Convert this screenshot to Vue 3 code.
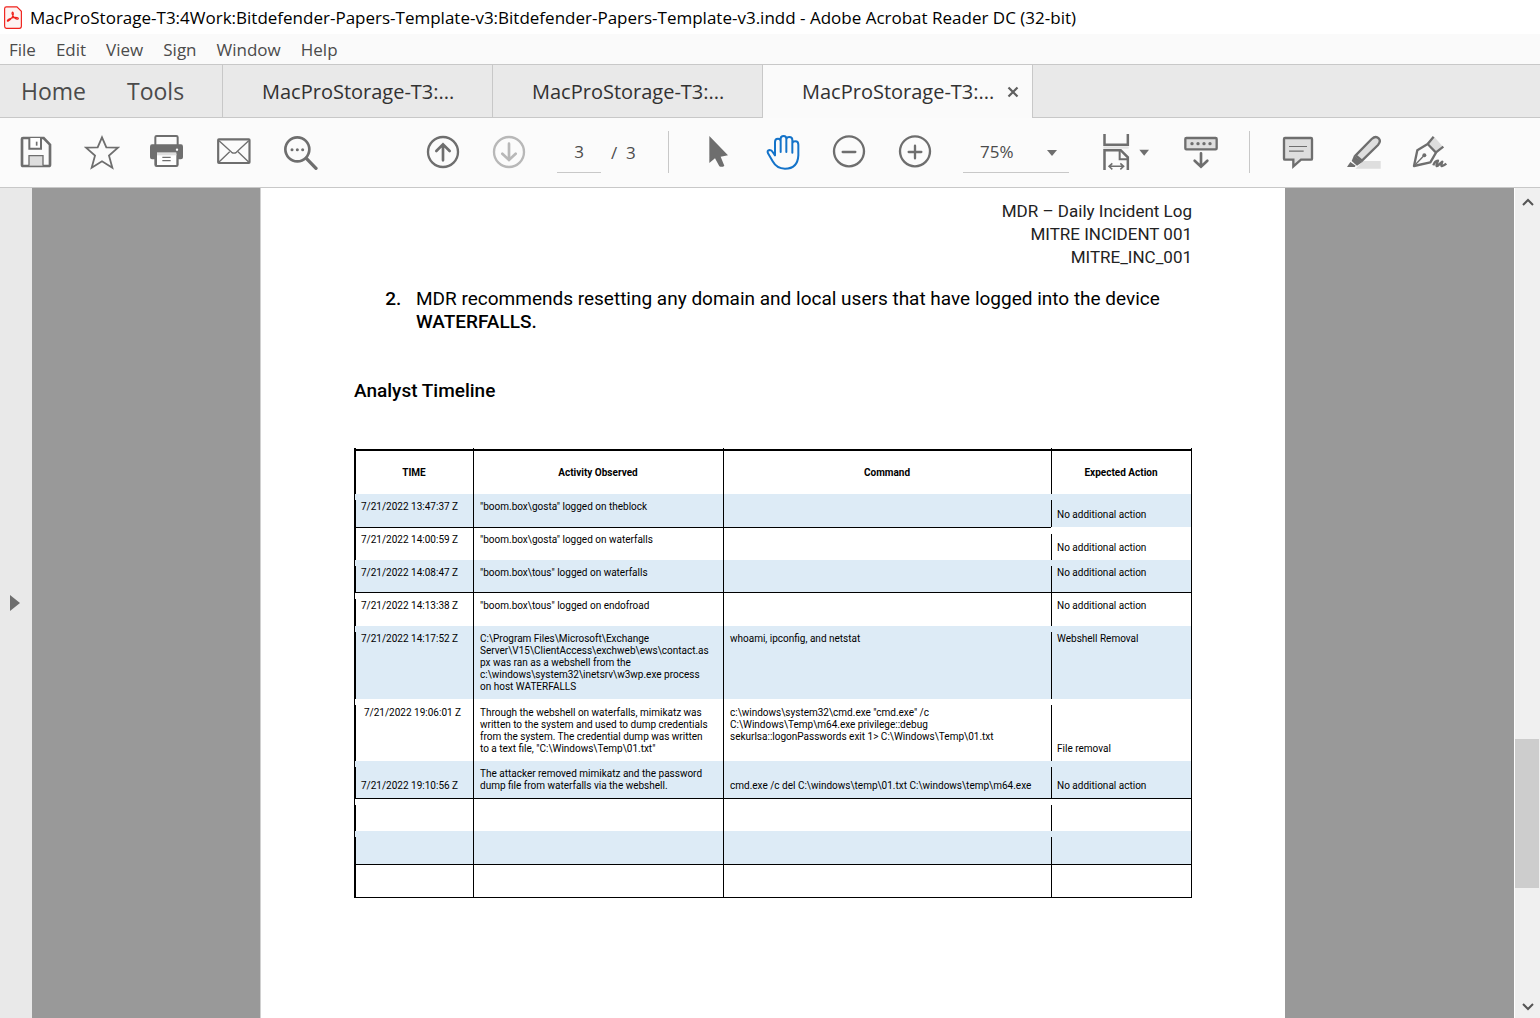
<script setup>
import { ref } from 'vue'

const menus = ['File', 'Edit', 'View', 'Sign', 'Window', 'Help']
const tabs = [
  { id: 1, label: 'MacProStorage-T3:...', active: false },
  { id: 2, label: 'MacProStorage-T3:...', active: false },
  { id: 3, label: 'MacProStorage-T3:...', active: true },
]
const page = ref('3')
const zoom = ref('75%')

// gap: row whose vertical rules start a little below its top; ruled: row closed by a horizontal rule
const rows = [
  { time: '7/21/2022 13:47:37 Z', activity: '"boom.box\\gosta" logged on theblock', action: 'No additional action', cls: 'h34 blue ruled open gap gap-action low-action' },
  { time: '7/21/2022 14:00:59 Z', activity: '"boom.box\\gosta" logged on waterfalls', action: 'No additional action', cls: 'h32 tight gap-action low-action' },
  { time: '7/21/2022 14:08:47 Z', activity: '"boom.box\\tous" logged on waterfalls', action: 'No additional action', cls: 'h33 blue ruled gap gap-action' },
  { time: '7/21/2022 14:13:38 Z', activity: '"boom.box\\tous" logged on endofroad', action: 'No additional action', cls: 'h33 gap' },
  { time: '7/21/2022 14:17:52 Z', activity: 'C:\\Program Files\\Microsoft\\Exchange\nServer\\V15\\ClientAccess\\exchweb\\ews\\contact.as\npx was ran as a webshell from the\nc:\\windows\\system32\\inetsrv\\w3wp.exe process\non host WATERFALLS', command: 'whoami, ipconfig, and netstat', action: 'Webshell Removal', cls: 'h73 blue gap gap-action' },
  { time: '7/21/2022 19:06:01 Z', activity: 'Through the webshell on waterfalls, mimikatz was\nwritten to the system and used to dump credentials\nfrom the system. The credential dump was written\nto a text file, "C:\\Windows\\Temp\\01.txt"', command: 'c:\\windows\\system32\\cmd.exe "cmd.exe" /c\nC:\\Windows\\Temp\\m64.exe privilege::debug\nsekurlsa::logonPasswords exit 1> C:\\Windows\\Temp\\01.txt', action: 'File removal', cls: 'h62 indent gap gap-action low-action' },
  { time: '7/21/2022 19:10:56 Z', activity: 'The attacker removed mimikatz and the password\ndump file from waterfalls via the webshell.', command: 'cmd.exe /c del C:\\windows\\temp\\01.txt C:\\windows\\temp\\m64.exe', action: 'No additional action', cls: 'h38 blue ruled low gap gap-action' },
  { cls: 'h32 gap gap-action' },
  { cls: 'h34 blue ruled gap gap-action' },
  { cls: 'h33 ruled' },
]
</script>

<template>
  <div class="app">
    <header class="title-bar">
      <svg class="app-icon" viewBox="12 14 54 70" aria-hidden="true">
        <path d="M19 16.500H51L64.500 30V76q0 6-6 6H19q-5.500 0-5.500-6V22q0-5.500 5.500-5.500Z" fill="#fdf3f2" stroke="#f0201a" stroke-width="3.500" />
        <path d="M24 60C32 57 42 43 40 36C38 30 34 33 37 40C41 50 49 56 54 54C58 51 52 48 44 49C34 50 24 54 22 58Q21 61 24 60Z" fill="none" stroke="#f0201a" stroke-width="3.500" />
      </svg>
      <span>MacProStorage-T3:4Work:Bitdefender-Papers-Template-v3:Bitdefender-Papers-Template-v3.indd - Adobe Acrobat Reader DC (32-bit)</span>
    </header>

    <nav class="menu-bar" aria-label="Application menu">
      <button v-for="m in menus" :key="m" type="button">{{ m }}</button>
    </nav>

    <div class="tab-bar">
      <div class="fixed-tabs">
        <button type="button">Home</button>
        <button type="button">Tools</button>
      </div>
      <div v-for="t in tabs" :key="t.id" class="tab" :class="{ active: t.active }">
        <button type="button" class="tab-name">{{ t.label }}</button>
        <button v-if="t.active" type="button" class="tab-close" aria-label="Close tab">
          <svg viewBox="0 0 12 12"><path d="M1.500 1.500L10.500 10.500M10.500 1.500L1.500 10.500" stroke="#5f5f5f" stroke-width="2.200" /></svg>
        </button>
      </div>
    </div>

    <div class="toolbar" role="toolbar" aria-label="Document tools">
      <button type="button" class="tool" aria-label="Save">
        <svg viewBox="54 42 108 108">
          <path d="M69 54H131L150 74V134Q150 138 146 138H69Q66 138 66 134V57Q66 54 69 54Z" fill="none" stroke="#6e6e6e" stroke-width="8" />
          <path d="M88 54V86H123V54" fill="#fff" stroke="#6e6e6e" stroke-width="6" />
          <path d="M110 65V77" stroke="#6e6e6e" stroke-width="5" />
          <path d="M87 137V107H129V137" fill="#dedede" stroke="#6e6e6e" stroke-width="4" />
        </svg>
      </button>
      <button type="button" class="tool" aria-label="Star">
        <svg viewBox="252 42 108 108">
          <path d="M306 52L319 82L354 83L327 107L337 143L306 124L275 143L285 107L258 83L293 82Z" fill="none" stroke="#6e6e6e" stroke-width="5.500" />
        </svg>
      </button>
      <button type="button" class="tool" aria-label="Print">
        <svg viewBox="450 42 108 108">
          <path d="M466 78V52Q466 48 470 48H529Q533 48 533 52V78" fill="none" stroke="#6e6e6e" stroke-width="6" />
          <path d="M456 73H543Q549 73 549 80V112Q549 118 543 118H536V134Q536 141 529 141H470Q463 141 463 134V118H456Q450 118 450 112V80Q450 73 456 73Z" fill="#6e6e6e" />
          <path d="M471 101H529V135H471Z" fill="#fff" />
          <path d="M471 97H529V106H471Z" fill="#dedede" />
          <path d="M487 112H512M487 122H512" stroke="#6e6e6e" stroke-width="3.500" />
          <circle cx="531" cy="89" r="3.500" fill="#fff" />
        </svg>
      </button>
      <button type="button" class="tool" aria-label="Send by email">
        <svg viewBox="648 42 108 108">
          <rect x="654.500" y="58" width="94" height="71" rx="2" fill="none" stroke="#6e6e6e" stroke-width="6.500" />
          <path d="M657 62L695 97Q702 102 709 97L746 62M657 126L689 95M746 126L714 95" fill="none" stroke="#6e6e6e" stroke-width="4" />
        </svg>
      </button>
      <button type="button" class="tool" aria-label="Search">
        <svg viewBox="846 42 108 108">
          <circle cx="892" cy="88" r="36" fill="none" stroke="#6e6e6e" stroke-width="8" />
          <path d="M919 115L948 145" stroke="#6e6e6e" stroke-width="10" stroke-linecap="round" />
          <circle cx="876" cy="89" r="4.500" fill="#6e6e6e" /><circle cx="892" cy="89" r="4.500" fill="#6e6e6e" /><circle cx="908" cy="89" r="4.500" fill="#6e6e6e" />
        </svg>
      </button>

      <div class="tool-group paging">
        <button type="button" class="tool" aria-label="Previous page">
          <svg viewBox="75 222 108 108" fill="none" stroke="#6e6e6e" stroke-width="7">
            <circle cx="129" cy="276" r="45" /><path d="M129 301V255M109 273L129 253L149 273" stroke-width="8" stroke-linecap="round" />
          </svg>
        </button>
        <button type="button" class="tool" aria-label="Next page" disabled>
          <svg viewBox="273 222 108 108" fill="none" stroke="#b8b8b8" stroke-width="7">
            <circle cx="327" cy="276" r="45" /><path d="M327 251V297M307 281L327 300L347 281" stroke-width="8" stroke-linecap="round" />
          </svg>
        </button>
        <div class="page-box">
          <input v-model="page" type="text" aria-label="Page number" />
          <span>/&nbsp; 3</span>
        </div>
      </div>
      <span class="divider"></span>

      <button type="button" class="tool" aria-label="Select">
        <svg viewBox="897 222 108 108"><path d="M928 228V309L945 295L958 319Q967 323 973 317L962 290L984 286Z" fill="#6e6e6e" /></svg>
      </button>
      <button type="button" class="tool" aria-label="Hand">
        <svg viewBox="15 222 108 108" fill="none" stroke="#1473c9" stroke-width="6" stroke-linecap="round" stroke-linejoin="round">
          <path d="M45 286V246Q45 236 54 236Q62 236 62 244V276M62 244V236Q62 228 71 228Q79 228 79 236V276M79 238Q80 231 88 231Q97 231 97 240V278M97 250Q98 244 106 244Q115 244 115 254V286Q113 326 75 326Q50 326 38 304L24 280Q20 271 29 270Q35 270 38 276L45 286" />
        </svg>
      </button>
      <button type="button" class="tool" aria-label="Zoom out">
        <svg viewBox="213 222 108 108" fill="none" stroke="#6e6e6e" stroke-width="7">
          <circle cx="267" cy="274" r="45" /><path d="M248 276H286" stroke-width="7" stroke-linecap="round" />
        </svg>
      </button>
      <button type="button" class="tool" aria-label="Zoom in">
        <svg viewBox="411 222 108 108" fill="none" stroke="#6e6e6e" stroke-width="7">
          <circle cx="465" cy="274" r="45" /><path d="M446 276H484M465 257V295" stroke-width="7" stroke-linecap="round" />
        </svg>
      </button>
      <div class="zoom-box">
        <select v-model="zoom" aria-label="Zoom level">
          <option>50%</option>
          <option>75%</option>
          <option>100%</option>
        </select>
        <svg viewBox="0 0 10 6" aria-hidden="true"><path d="M0 0H10L5 6Z" fill="#6e6e6e" /></svg>
      </div>
      <button type="button" class="tool fit" aria-label="Fit width">
        <svg viewBox="1017 222 162 108">
          <path d="M1033.500 222V254H1103.500V222" fill="none" stroke="#6e6e6e" stroke-width="7.500" />
          <path d="M1030 259H1106V266H1030Z" fill="#e2e2e2" />
          <path d="M1033.500 330V270.500H1082L1103.500 292V330" fill="none" stroke="#6e6e6e" stroke-width="7.500" />
          <path d="M1079 270V298H1104" fill="none" stroke="#6e6e6e" stroke-width="6" />
          <path d="M1050 319H1088M1057 310L1047 319L1057 328M1081 310L1091 319L1081 328" fill="none" stroke="#6e6e6e" stroke-width="4.500" />
          <path d="M1138 269H1167L1152.500 287Z" fill="#6e6e6e" />
        </svg>
      </button>
      <button type="button" class="tool" aria-label="Page display">
        <svg viewBox="309 222 108 108">
          <rect x="316" y="234" width="94" height="34" rx="3" fill="#dedede" stroke="#6e6e6e" stroke-width="7" />
          <circle cx="336" cy="251" r="5" fill="#6e6e6e" /><circle cx="354" cy="251" r="5" fill="#6e6e6e" /><circle cx="372" cy="251" r="5" fill="#6e6e6e" /><circle cx="390" cy="251" r="5" fill="#6e6e6e" />
          <path d="M363 280V318M344 302L363 320L382 302" fill="none" stroke="#6e6e6e" stroke-width="8" stroke-linecap="round" />
        </svg>
      </button>
      <span class="divider"></span>
      <button type="button" class="tool" aria-label="Comment">
        <svg viewBox="600 222 108 108">
          <path d="M615 234H693Q696 234 696 237V296Q696 299 693 299H663L640 319V299H615Q612 299 612 296V237Q612 234 615 234Z" fill="#dedede" stroke="#6e6e6e" stroke-width="7" />
          <path d="M627 259.500H681M627 273.500H671" stroke="#6e6e6e" stroke-width="3.500" />
        </svg>
      </button>
      <button type="button" class="tool" aria-label="Highlight">
        <svg viewBox="798 222 108 108">
          <path d="M826 326L850 303H902V326Z" fill="#dedede" />
          <path d="M827 286L875 237Q887 226 896 235Q904 243 894 255L846 302Z" fill="#dedede" stroke="#6e6e6e" stroke-width="7" />
          <path d="M822 286L847 306L831 317L815 303Z" fill="#6e6e6e" />
          <path d="M801 321L811 306L827 317L824 321Z" fill="#6e6e6e" />
        </svg>
      </button>
      <button type="button" class="tool" aria-label="Sign document">
        <svg viewBox="996 222 108 108">
          <path d="M1046 250L1064 232L1087 258L1070 276Z" fill="#dedede" />
          <path d="M1002 318L1012 271L1043 252L1068 278L1051 307Z" fill="none" stroke="#6e6e6e" stroke-width="7" stroke-linejoin="round" />
          <path d="M1043 252L1061 230M1068 277L1090 260" stroke="#6e6e6e" stroke-width="7" />
          <path d="M1002 318L1030 289" stroke="#6e6e6e" stroke-width="4" /><circle cx="1033" cy="286" r="6" fill="#6e6e6e" />
          <path d="M1060 316Q1064 303 1074 302Q1066 320 1072 318L1087 305Q1081 320 1087 318T1099 311" fill="none" stroke="#6e6e6e" stroke-width="7" stroke-linejoin="round" />
        </svg>
      </button>
    </div>

    <main class="workspace">
      <button type="button" class="rail" aria-label="Show navigation pane">
        <svg viewBox="0 0 10 16"><path d="M0 0L10 8L0 16Z" fill="#6e6e6e" /></svg>
      </button>

      <div class="viewer">
        <article class="sheet">
          <div class="doc-head">
            <p>MDR – Daily Incident Log</p>
            <p>MITRE INCIDENT 001</p>
            <p>MITRE_INC_001</p>
          </div>
          <ol start="2" class="advice">
            <li>MDR recommends resetting any domain and local users that have logged into the device <b>WATERFALLS.</b></li>
          </ol>
          <h2>Analyst Timeline</h2>
          <table>
            <colgroup>
              <col class="c-time" /><col class="c-activity" /><col class="c-command" /><col class="c-action" />
            </colgroup>
            <thead>
              <tr>
                <th scope="col">TIME</th>
                <th scope="col">Activity Observed</th>
                <th scope="col">Command</th>
                <th scope="col">Expected Action</th>
              </tr>
            </thead>
            <tbody>
              <tr v-for="(r, i) in rows" :key="i" :class="r.cls">
                <td class="time">{{ r.time }}</td>
                <td>{{ r.activity }}</td>
                <td>{{ r.command }}</td>
                <td class="action">{{ r.action }}</td>
              </tr>
            </tbody>
          </table>
        </article>
      </div>

      <div class="scroll" aria-hidden="true">
        <svg class="up" viewBox="0 0 12 8"><path d="M1 7L6 2L11 7" /></svg>
        <div class="track"><i class="before"></i><i class="thumb"></i><i class="after"></i></div>
        <svg class="down" viewBox="0 0 12 8"><path d="M1 1L6 6L11 1" /></svg>
      </div>
    </main>
  </div>
</template>

<style>
body {
  margin: 0;
}
</style>

<style scoped>
.app {
  display: flex;
  flex-direction: column;
  min-height: 100vh;
  background: #fff;
  font-family: "Segoe UI", "Open Sans", "Noto Sans", sans-serif;
  color: #4b4b4b;
}
button {
  padding: 0;
  border: 0;
  background: none;
  color: inherit;
  font: inherit;
}
svg {
  display: block;
}
.title-bar {
  display: flex;
  align-items: center;
  gap: 8px;
  height: 34px;
  padding-left: 4px;
  color: #000;
  font-size: 17px;
  white-space: nowrap;
}
.app-icon {
  width: 18px;
  height: 23px;
}
.menu-bar {
  display: flex;
  align-items: center;
  gap: 20px;
  height: 30px;
  padding-left: 9px;
  background: #fafafa;
  font-size: 17px;
}
.tab-bar {
  display: flex;
  height: 52px;
  border-top: 1px solid #c8c8c8;
  border-bottom: 1px solid #c8c8c8;
  background: #e9e9e9;
}
.fixed-tabs {
  display: flex;
  align-items: center;
  gap: 41px;
  box-sizing: border-box;
  width: 223px;
  padding-left: 21px;
  border-right: 1px solid #c8c8c8;
  font-size: 23px;
}
.tab {
  display: flex;
  align-items: center;
  gap: 13px;
  box-sizing: border-box;
  width: 270px;
  padding-left: 39px;
  border-right: 1px solid #c8c8c8;
  color: #323232;
  font-size: 20px;
}
.tab.active {
  margin-bottom: -1px;
  background: #fafafa;
}
.tab-close svg {
  width: 12px;
  height: 12px;
}
.toolbar {
  display: flex;
  align-items: center;
  gap: 30px;
  height: 68px;
  padding: 0 0 1px 18px;
  border-bottom: 1px solid #c8c8c8;
  background: #fbfbfb;
}
.tool {
  flex: none;
  width: 36px;
  height: 36px;
}
.tool svg {
  width: 100%;
  height: 100%;
}
.tool.fit {
  width: 54px;
}
.tool-group {
  display: flex;
  align-items: center;
  gap: 30px;
}
.paging {
  margin-left: 77px;
}
.page-box {
  display: flex;
  align-items: center;
  gap: 10px;
  width: 81px;
  font-size: 17px;
  white-space: nowrap;
}
.page-box input {
  box-sizing: border-box;
  width: 44px;
  height: 42px;
  padding: 0;
  border: 0;
  border-bottom: 1px solid #c8c8c8;
  background: none;
  color: inherit;
  font: inherit;
  text-align: center;
}
.divider {
  width: 1px;
  height: 42px;
  background: #c8c8c8;
}
.zoom-box {
  position: relative;
  width: 106px;
}
.zoom-box select {
  display: block;
  box-sizing: border-box;
  width: 100%;
  height: 42px;
  padding: 0 0 0 17px;
  appearance: none;
  border: 0;
  border-bottom: 1px solid #c8c8c8;
  border-radius: 0;
  background: none;
  color: inherit;
  font: inherit;
  font-size: 17px;
}
.zoom-box svg {
  position: absolute;
  top: 19px;
  right: 12px;
  width: 10px;
  height: 6px;
  pointer-events: none;
}
.workspace {
  display: flex;
  flex: 1;
}
.rail {
  display: flex;
  align-items: center;
  width: 32px;
  padding-left: 10px;
  background: #e9e9e9;
}
.rail svg {
  width: 10px;
  height: 16px;
}
.viewer {
  display: flex;
  flex: 1;
  justify-content: center;
  padding-right: 1px;
  background: #999;
}
.sheet {
  box-sizing: border-box;
  width: 1025px;
  padding: 12px 93px 40px;
  border-left: 1px solid #d0d0d0;
  background: #fff;
  color: #000;
  font-family: Roboto, sans-serif;
  font-size: 19px;
  line-height: 23px;
}
.doc-head {
  color: #222;
  font-size: 17px;
  text-align: right;
}
.doc-head p {
  margin: 0;
}
.advice {
  margin: 18px 0 0;
  padding-left: 52px;
}
.advice li {
  padding-left: 10px;
}
.advice li::marker {
  font-weight: 500;
}
.advice b {
  font-weight: 500;
}
h2 {
  margin: 46px 0;
  font-size: 19px;
  font-weight: 500;
}
table {
  width: 100%;
  border-left: 1px solid #000;
  border-right: 1px solid #000;
  border-spacing: 0;
  table-layout: fixed;
  font-size: 10px;
  line-height: 12px;
}
.c-time { width: 118px; }
.c-activity { width: 250px; }
.c-command { width: 328px; }
.c-action { width: 140px; }
th {
  height: 46px;
  box-sizing: border-box;
  padding: 4px 0 0;
  background-image: linear-gradient(#000, #000), linear-gradient(#000, #000);
  background-position: 0 1px, 0 0;
  background-repeat: no-repeat;
  background-size: 100% 2px, 1px 100%;
  font-weight: 700;
}
td {
  box-sizing: border-box;
  padding: 7px 0 6px 7px;
  background-image: linear-gradient(#000, #000);
  background-position: left bottom;
  background-repeat: no-repeat;
  background-size: 1px 100%;
  vertical-align: top;
  white-space: pre;
}
td.time,
td.action {
  padding-left: 6px;
}
.h32 td { height: 32px; }
.h33 td { height: 33px; }
.h34 td { height: 34px; }
.h38 td { height: 38px; }
.h62 td { height: 62px; }
.h73 td { height: 73px; }
.blue td { background-color: #ddebf6; }
.ruled td { border-bottom: 1px solid #000; }
.ruled.open td.action { border-bottom-color: #fff; }
.tight td { padding-top: 6px; }
.indent td { padding-top: 8px; }
.indent td.time { padding-left: 9px; }
.gap td.time,
.gap-action td.action {
  background-size: 1px calc(100% - 6px);
}
.low td,
.low-action td.action {
  vertical-align: bottom;
}
.scroll {
  display: flex;
  flex-direction: column;
  align-items: center;
  width: 25px;
  border-left: 1px solid #fff;
  background: #f0f0f0;
}
.scroll svg {
  width: 12px;
  height: 8px;
  fill: none;
  stroke: #555;
  stroke-width: 2;
}
.scroll .up {
  margin: 10px 0 12px;
}
.scroll .down {
  margin: 15px 0 7px;
}
.track {
  display: flex;
  flex: 1;
  flex-direction: column;
  align-self: stretch;
}
.before { flex: 521; }
.thumb {
  flex: 149;
  margin-right: 1px;
  background: #cdcdcd;
}
.after { flex: 100; }
</style>
